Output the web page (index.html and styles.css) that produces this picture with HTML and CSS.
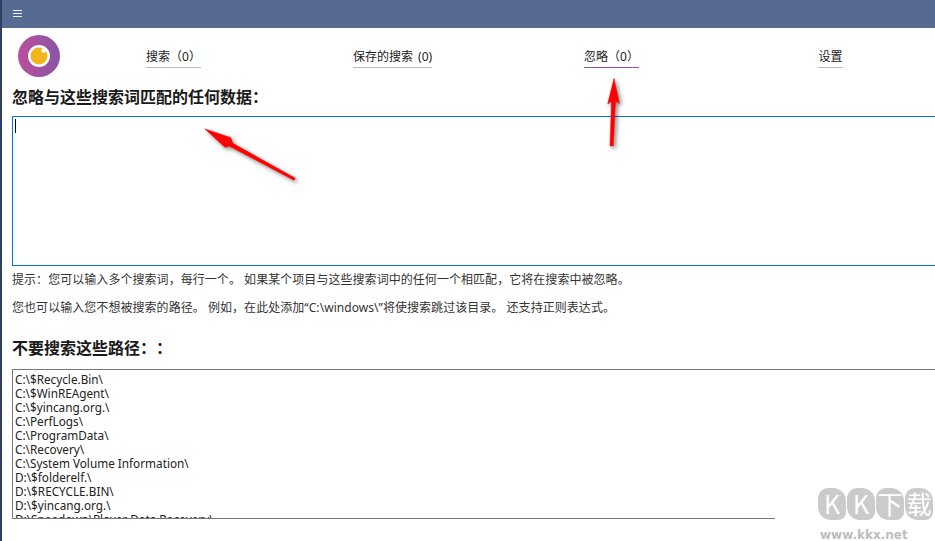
FILE: index.html
```html
<!DOCTYPE html>
<html lang="zh-CN">
<head>
<meta charset="utf-8">
<title>忽略</title>
<link rel="stylesheet" href="styles.css">
</head>
<body>
<div class="app">
  <header class="titlebar">
    <svg class="menu-icon" width="9" height="7" viewBox="0 0 9 7"><path d="M0 .5h9M0 3.500h9M0 6.500h9" stroke="#e8ecf4" stroke-width="1"/></svg>
  </header>
  <nav class="nav">
    <svg class="logo" width="42" height="42" viewBox="0 0 42 42">
      <defs><linearGradient id="lg" x1="0" y1="0" x2="1" y2="0"><stop offset="0" stop-color="#bb4f9c"/><stop offset="1" stop-color="#8a55a6"/></linearGradient></defs>
      <circle cx="21" cy="21" r="21" fill="url(#lg)"/>
      <circle cx="21" cy="21" r="11" fill="#fff"/>
      <circle cx="21" cy="21" r="8.500" fill="#f3b51c"/>
      <circle cx="25.500" cy="15.500" r="2.300" fill="#fff"/>
    </svg>
    <div class="tabs">
      <div class="tab-cell"><a class="tab">搜索（0）</a></div>
      <div class="tab-cell"><a class="tab">保存的搜索 (0)</a></div>
      <div class="tab-cell"><a class="tab active">忽略（0）</a></div>
      <div class="tab-cell"><a class="tab">设置</a></div>
    </div>
  </nav>
  <main class="content">
    <h2 class="heading first">忽略与这些搜索词匹配的任何数据：</h2>
    <div class="input-box"><span class="caret"></span></div>
    <p class="hint hint-one">提示：您可以输入多个搜索词，每行一个。 如果某个项目与这些搜索词中的任何一个相匹配，它将在搜索中被忽略。</p>
    <p class="hint hint-two">您也可以输入您不想被搜索的路径。 例如，在此处添加“C:\windows\”将使搜索跳过该目录。 还支持正则表达式。</p>
    <h2 class="heading second">不要搜索这些路径：：</h2>
    <div class="path-box">
      <div>C:\$Recycle.Bin\</div>
      <div>C:\$WinREAgent\</div>
      <div>C:\$yincang.org.\</div>
      <div>C:\PerfLogs\</div>
      <div>C:\ProgramData\</div>
      <div>C:\Recovery\</div>
      <div>C:\System Volume Information\</div>
      <div>D:\$folderelf.\</div>
      <div>D:\$RECYCLE.BIN\</div>
      <div>D:\$yincang.org.\</div>
      <div>D:\Speedown\Player Data Recovery\</div>
    </div>
  </main>
  <svg class="arrow arrow-left" width="110" height="70" viewBox="0 0 110 70"><path d="M5 4L30.700 12.700L32.700 18.300L95.300 53.300L94 55.300L29.300 21L25 22.300Z" fill="#f00" stroke="#f00" stroke-width=".6"/></svg>
  <svg class="arrow arrow-up" width="30" height="80" viewBox="0 0 30 80"><path d="M14 4.300L19.300 29.300L15.500 27L13.300 72H10L11.500 27.500L7.700 30Z" fill="#f00" stroke="#f00" stroke-width=".5"/></svg>
  <div class="watermark">
    <div class="stones"><span class="stone">K</span><span class="stone">K</span><span class="stone">下</span><span class="stone">载</span></div>
    <div class="url">www.kkx.net</div>
  </div>
</div>
</body>
</html>
```
FILE: styles.css
```css
* { box-sizing: border-box; }
html, body { margin: 0; height: 100%; background: #fff; overflow: hidden; }
.app {
  position: relative;
  width: 935px;
  height: 541px;
  overflow: hidden;
  border-left: 2px solid #2f3f60;
  font-family: "Noto Sans", "Noto Sans CJK SC", sans-serif;
  color: #222;
}
.titlebar {
  height: 28px;
  background: #566a92;
  display: flex;
  align-items: flex-start;
  padding: 10px 0 0 11px;
}
.menu-icon { display: block; }
.nav {
  display: flex;
  align-items: flex-start;
  height: 55px;
  padding: 7px 0 0 16px;
}
.logo { flex: none; display: block; }
.tabs { display: flex; flex: none; margin-left: 4px; }
.tab-cell { width: 219px; flex: none; display: flex; justify-content: center; padding-top: 7px; }
.tab {
  display: block;
  font-size: 12px;
  line-height: 18px;
  height: 26px;
  padding-top: 6px;
  border-bottom: 1px solid #bbb;
  color: #222;
  white-space: nowrap;
  word-spacing: 2px;
}
.tab.active { border-bottom-color: #9c4f9a; }
.content { padding-left: 10px; }
.heading {
  margin: 0;
  font-size: 16px;
  line-height: 20px;
  font-weight: 700;
  color: #1a1a1a;
  white-space: nowrap;
  text-spacing-trim: space-all;
}
.heading.first { margin-top: 4px; }
.input-box {
  margin-top: 9px;
  width: 940px;
  height: 150px;
  border: 1px solid #0078d7;
  padding: 2px 0 0 2px;
}
.caret { display: block; width: 1px; height: 14px; background: #000; }
.hint {
  margin: 0;
  font-size: 12px;
  line-height: 16px;
  color: #333;
  white-space: nowrap;
  letter-spacing: .05px;
}
.hint-one { margin-top: 6px; }
.hint-two { margin-top: 12px; }
.heading.second { margin-top: 22px; }
.path-box {
  margin-top: 11px;
  width: 940px;
  height: 150px;
  border: 1px solid #777;
  border-bottom: 0;
  padding: 2px 0 0 2px;
  font-size: 11.750px;
  line-height: 14px;
  color: #222;
  overflow: hidden;
  position: relative;
}
.path-box::after {
  content: "";
  position: absolute;
  left: -1px;
  bottom: 0;
  width: 763px;
  height: 1px;
  background: #777;
}
.arrow { position: absolute; filter: drop-shadow(2px 2px 2px rgba(0,0,0,.5)); }
.arrow-left { left: 198px; top: 125px; }
.arrow-up { left: 598px; top: 74px; }
.watermark { position: absolute; left: 816px; top: 488px; width: 115px; }
.stones { display: flex; gap: 1px; }
.stone {
  width: 28px;
  height: 32px;
  border-radius: 10px 13px 8px 13px;
  background: #cbcbcb;
  color: #fff;
  font: 400 25px/31px "Noto Sans CJK SC", sans-serif;
  text-align: center;
}
.url {
  margin: 9px 0 0 2px;
  font: 700 12px/12px "DejaVu Sans", sans-serif;
  color: #bdbdbd;
}
```
